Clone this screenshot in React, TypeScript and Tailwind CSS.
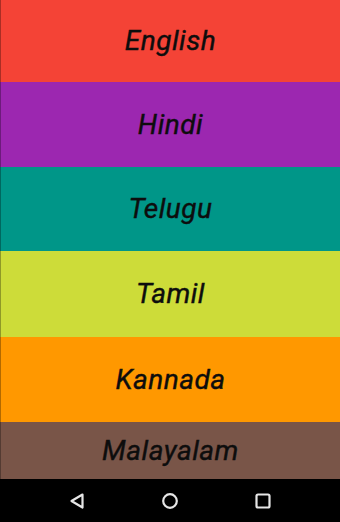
const LANGUAGES = [
  { name: "English", className: "h-[82px] bg-[#f44336]" },
  { name: "Hindi", className: "h-[85px] bg-[#9c27b0]" },
  { name: "Telugu", className: "h-[84px] bg-[#009688]" },
  { name: "Tamil", className: "h-[86px] bg-[#cddc39]" },
  { name: "Kannada", className: "h-[85px] bg-[#ff9800]" },
  { name: "Malayalam", className: "h-[57px] bg-[#795548]" },
];

function NavBar() {
  return (
    <div className="flex h-[43px] items-center justify-center gap-[75px] bg-black">
      <svg width="18" height="18" viewBox="0 0 18 18" fill="none">
        <path
          d="M14.5 2.5 L3.5 9 L14.5 15.5 Z"
          stroke="#e6e6e6"
          strokeWidth="2.2"
          strokeLinejoin="round"
        />
      </svg>
      <svg width="18" height="18" viewBox="0 0 18 18" fill="none">
        <circle cx="9" cy="9" r="6.8" stroke="#e6e6e6" strokeWidth="2.2" />
      </svg>
      <svg width="18" height="18" viewBox="0 0 18 18" fill="none">
        <rect
          x="2.5"
          y="2.5"
          width="13"
          height="13"
          rx="1.5"
          stroke="#e6e6e6"
          strokeWidth="2.2"
        />
      </svg>
    </div>
  );
}

export default function App() {
  return (
    <div className="flex h-[522px] w-[340px] flex-col overflow-hidden font-['Roboto',sans-serif]">
      {LANGUAGES.map((lang) => (
        <div
          key={lang.name}
          className={`flex shrink-0 items-center justify-center border-l border-black/30 ${lang.className}`}
        >
          <span className="text-[28px] font-normal italic leading-none tracking-[0.5px] text-[#0d0d0d] [-webkit-text-stroke:0.4px_#0d0d0d]">
            {lang.name}
          </span>
        </div>
      ))}
      <NavBar />
    </div>
  );
}
